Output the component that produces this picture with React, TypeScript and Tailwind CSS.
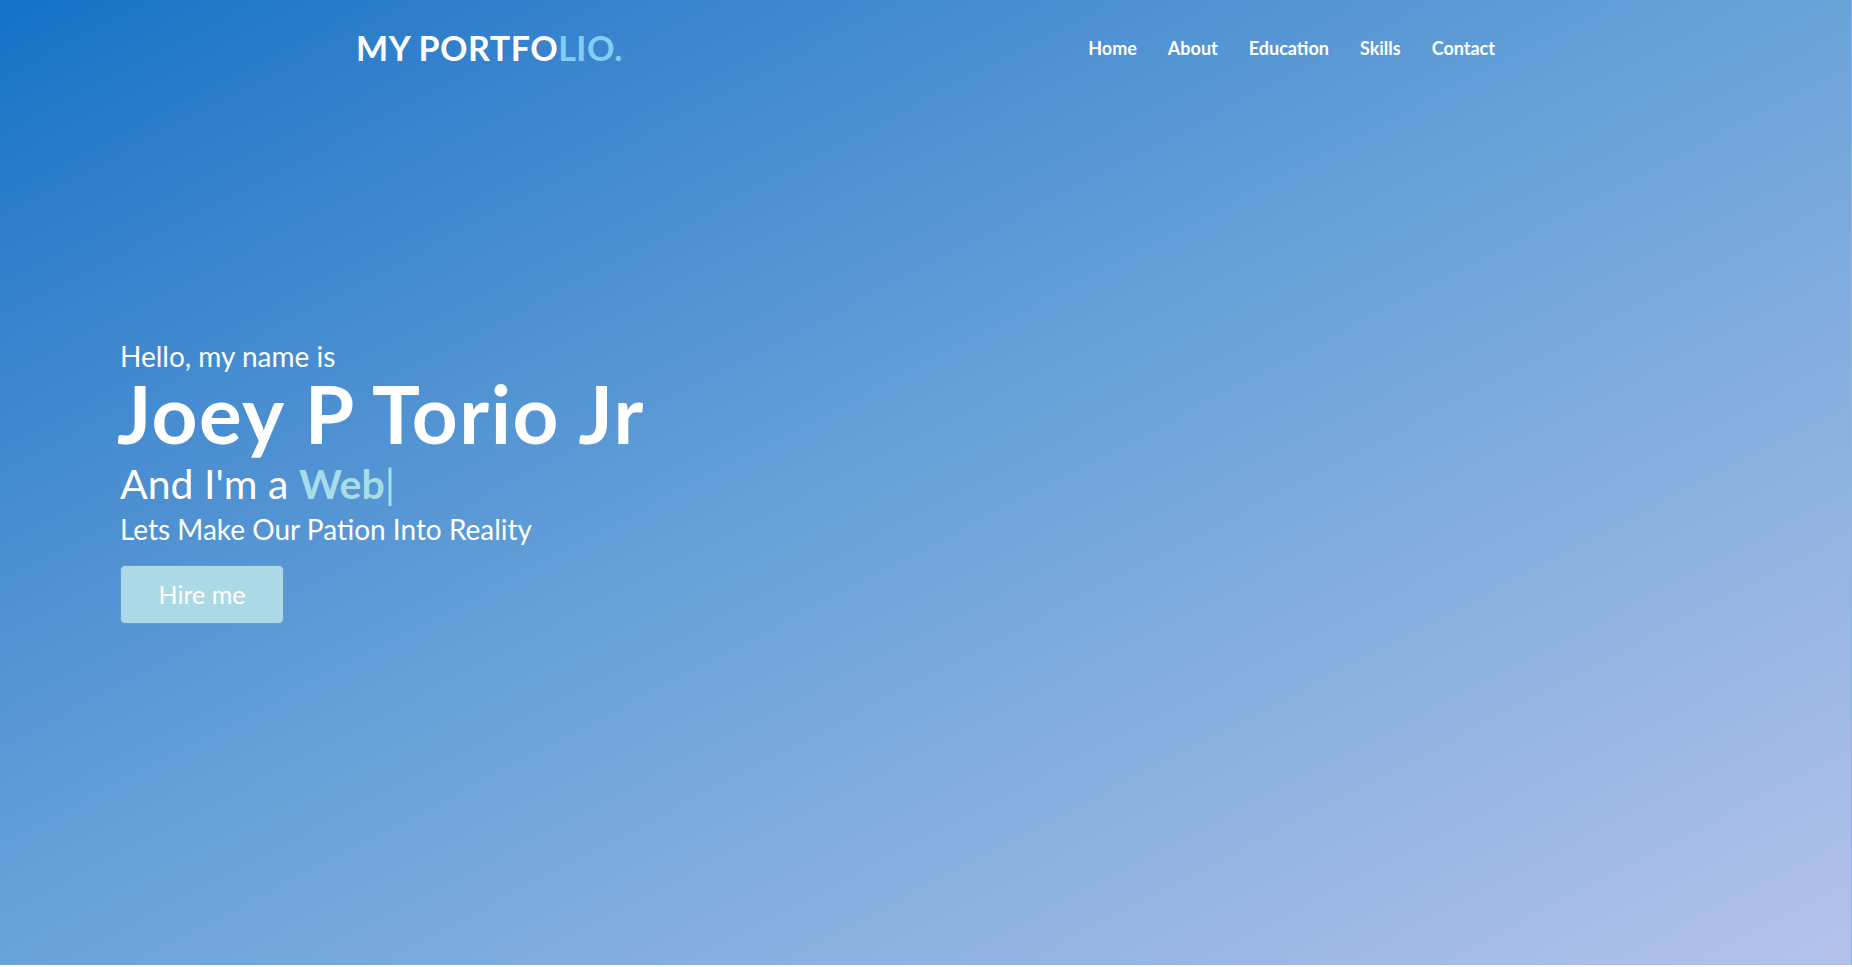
const navLinks = ["Home", "About", "Education", "Skills", "Contact"];

const App = () => {
    return (
        <div className="w-full bg-[#17393b] font-['Lato',sans-serif]">
            <section className="flex flex-col h-[965px] bg-gradient-to-br from-[#1172c6] via-[#6aa3d9] to-[#b4c2ea] border-r border-[#8fb4e0]">
                {/* Header */}
                <header className="flex items-center justify-between pl-[356px] pr-[356px] pt-[28px]">
                    <h1 className="text-[34px] font-bold text-white tracking-[0.5px] leading-[40px]">
                        MY PORTFO<span className="text-[#86cdf5]">LIO.</span>
                    </h1>
                    <nav>
                        <ul className="flex gap-[31px]">
                            {navLinks.map((link) => (
                                <li key={link}>
                                    <a
                                        href={"#" + link.toLowerCase()}
                                        className="text-[18px] font-bold text-white leading-[40px]"
                                    >
                                        {link}
                                    </a>
                                </li>
                            ))}
                        </ul>
                    </nav>
                </header>

                {/* Hero */}
                <div className="flex flex-col items-start pl-[120px] pt-[270px] text-white">
                    <p className="text-[28px] leading-[36px]">Hello, my name is</p>
                    <h2 className="text-[80px] font-bold leading-[78px] tracking-[1.5px] -ml-[3px]">Joey P Torio Jr</h2>
                    <p className="text-[41px] leading-[48px] mt-[8px]">
                        And I'm a <span className="font-bold text-[#a9dcea]">Web</span>
                        <span className="text-[#a9dcea]">|</span>
                    </p>
                    <p className="text-[28px] leading-[36px] mt-[3px]">Lets Make Our Pation Into Reality</p>
                    <button className="mt-[18px] w-[164px] h-[59px] rounded-[5px] bg-[#add8e6] border border-[#5b9fd6] text-[25px] text-white">
                        Hire me
                    </button>
                </div>
            </section>
        </div>
    );
};

export default App;
